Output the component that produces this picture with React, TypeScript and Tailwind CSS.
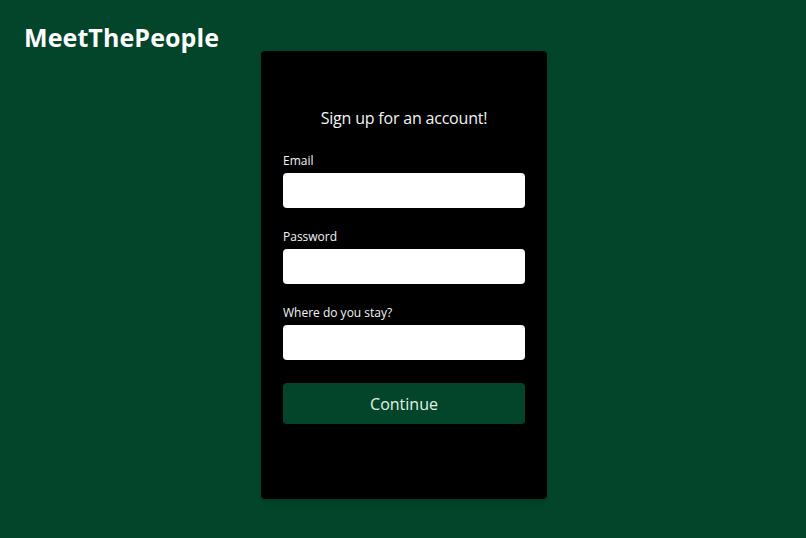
import React from "react";

const FONT = { fontFamily: '"Open Sans", "Noto Sans", sans-serif' };

function Field({ label, type = "text" }: { label: string; type?: string }) {
  return (
    <label className="block">
      <span className="block h-4 text-[12px] leading-4 text-gray-100">{label}</span>
      <input type={type} className="mt-1 block h-[35px] w-full rounded bg-white px-3 text-sm text-black outline-none" />
    </label>
  );
}

export default function App() {
  return (
    <div className="min-h-[538px] w-full bg-[#03452a]" style={FONT}>
      <header className="h-[51px] px-6 pt-[22px]">
        <h1 className="text-[25px] font-bold leading-[30px] tracking-[0.1px] text-white">MeetThePeople</h1>
      </header>
      <div className="flex justify-center pl-[2px]">
        <div className="w-[286px] rounded bg-black px-[22px] pt-[55px] pb-[75px] shadow-md">
          <h2 className="text-center text-[16px] leading-6 tracking-[-0.2px] text-gray-100">Sign up for an account!</h2>
          <div className="mt-[23px] space-y-[21px]">
            <Field label="Email" type="email" />
            <Field label="Password" type="password" />
            <Field label="Where do you stay?" />
          </div>
          <button className="mt-[23px] h-[41px] w-full rounded bg-[#03452a] text-[16px] text-[#e3f1e8]">
            Continue
          </button>
        </div>
      </div>
    </div>
  );
}
